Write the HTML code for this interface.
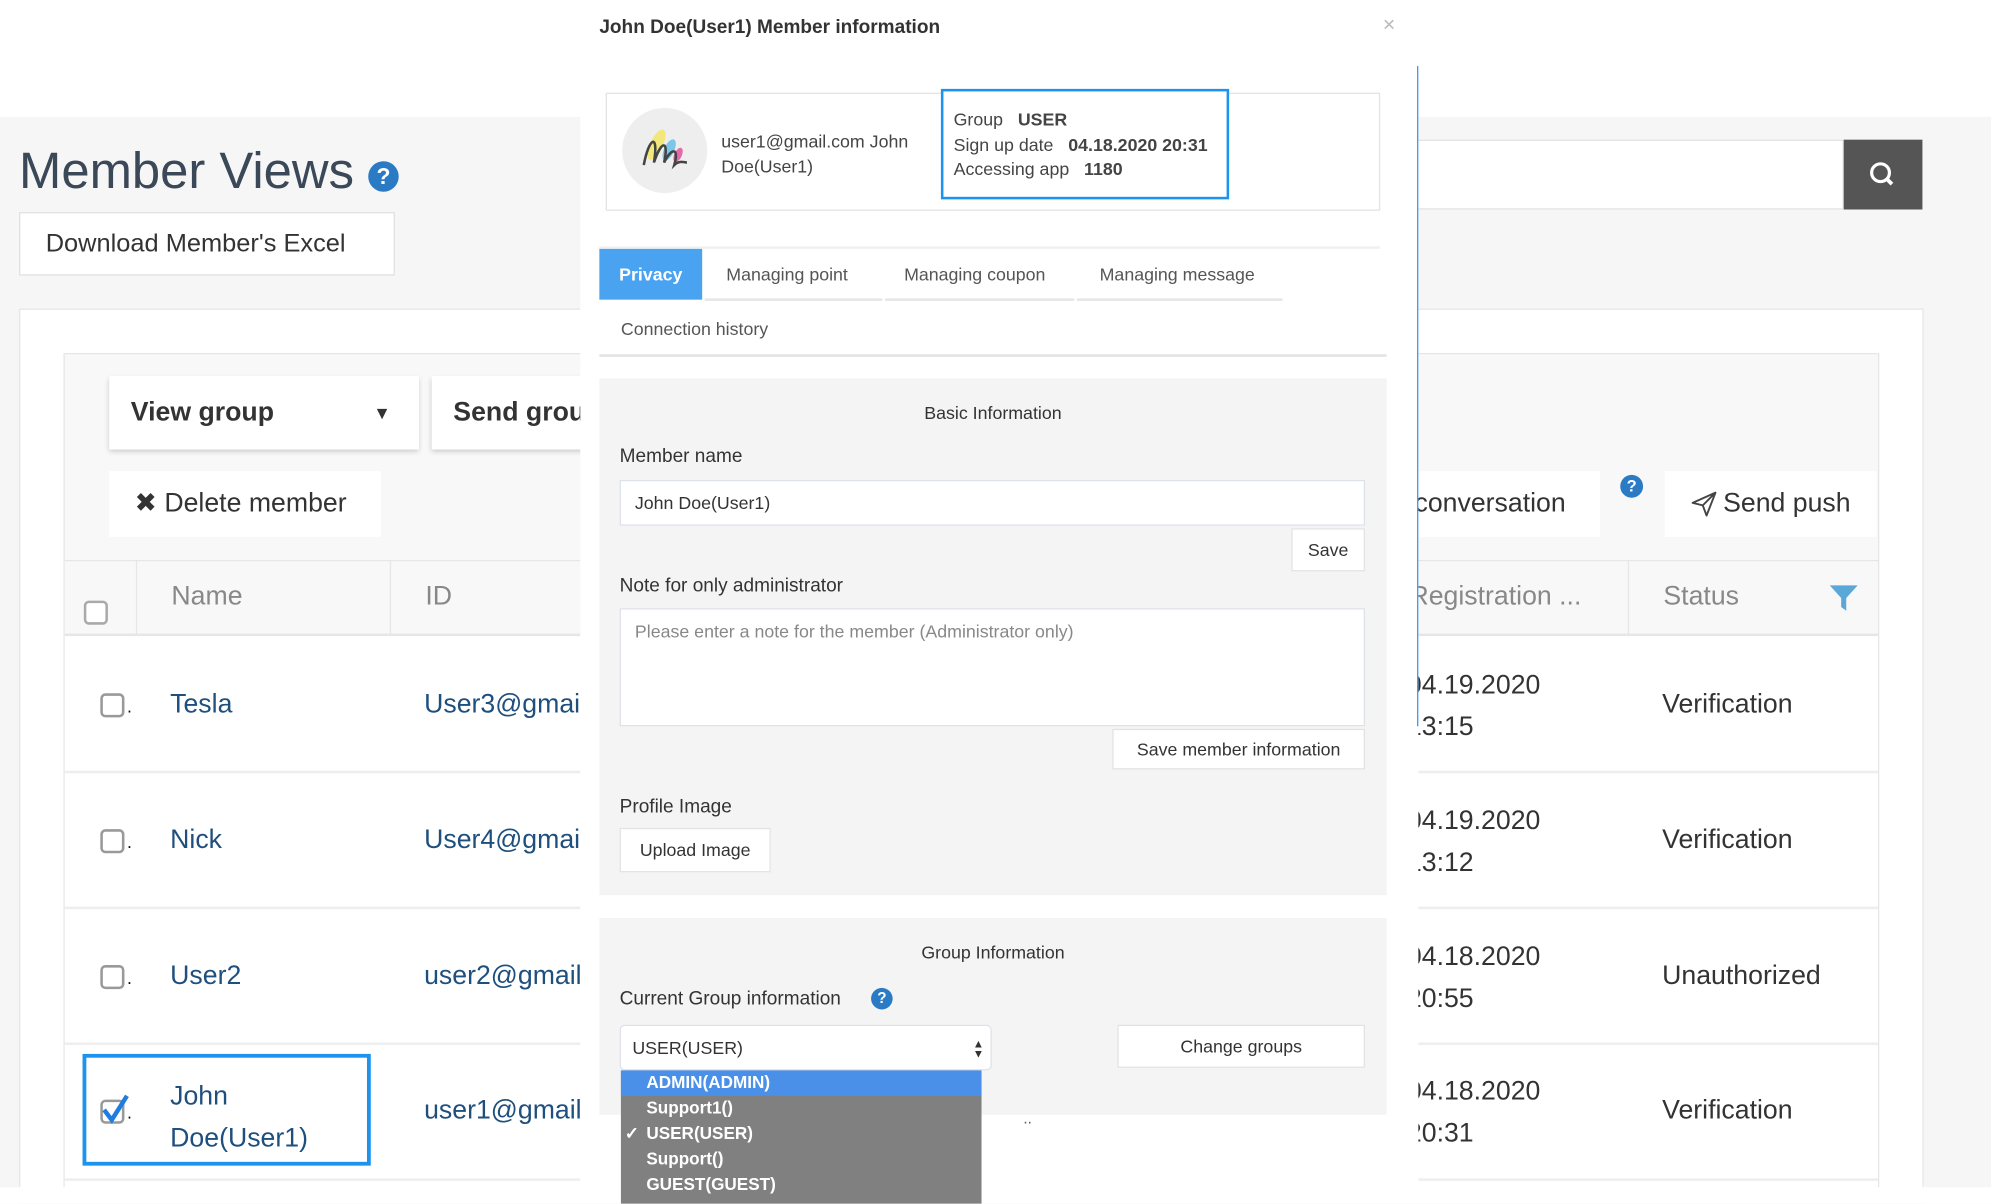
<!DOCTYPE html>
<html><head><meta charset="utf-8"><style>
*{box-sizing:border-box;margin:0;padding:0}
html,body{width:1991px;height:1204px;overflow:hidden;background:#fff;font-family:"Liberation Sans",sans-serif}
#s{position:absolute;left:0;top:0;width:1568px;height:948px;transform:scale(1.26977);transform-origin:0 0;background:#fff;overflow:hidden}
.a{position:absolute}
.box{position:absolute;background:#fff}
.t{position:absolute;white-space:nowrap}
.help{position:absolute;border-radius:50%;background:#2a7bc4;color:#fff;font-weight:bold;text-align:center}
.cb{position:absolute;width:19px;height:19px;border:2px solid #999;border-radius:4px;background:#fff}
.link{color:#1f4f7d;font-size:21px}
.btn{position:absolute;background:#fff;border:1px solid #e2e2e2;font-size:14px;color:#333;text-align:center}
</style></head><body><div id="s">
<div class="a" style="left:0;top:92px;width:1568px;height:856px;background:#f6f6f6"></div>
<div class="t" style="left:15px;top:113px;font-size:40px;color:#3b4858">Member Views</div>
<div class="help" style="left:290px;top:127px;width:24px;height:24px;font-size:18px;line-height:24px">?</div>
<div class="box" style="left:15px;top:167px;width:296px;height:50px;border:1px solid #e0e0e0;font-size:20px;color:#333;line-height:48px;padding-left:20px">Download Member's Excel</div>
<div class="box" style="left:15px;top:243px;width:1500px;height:705px;border:1px solid #e6e6e6"></div>
<div class="a" style="left:50px;top:278px;width:1430px;height:670px;background:#f8f8f8;border:1px solid #e6e6e6"></div>
<div class="box" style="left:86px;top:296px;width:244px;height:58px;box-shadow:0 2px 4px rgba(0,0,0,.18);font-size:21px;color:#333;line-height:58px;padding-left:17px;font-weight:bold">View group<span style="position:absolute;left:208px;top:0;font-size:14px">▼</span></div>
<div class="box" style="left:340px;top:296px;width:140px;height:58px;box-shadow:0 2px 4px rgba(0,0,0,.18);font-size:21px;color:#333;line-height:58px;padding-left:17px;font-weight:bold">Send group</div>
<div class="box" style="left:86px;top:371px;width:214px;height:52px;font-size:21px;color:#333;line-height:52px;padding-left:20px">✖ Delete member</div>
<div class="box" style="left:1100px;top:110px;width:352px;height:55px;border:1px solid #e3e3e3"></div>
<div class="a" style="left:1452px;top:110px;width:62px;height:55px;background:#555">
<svg width="62" height="55"><circle cx="29" cy="26" r="7" fill="none" stroke="#fff" stroke-width="2.5"/><line x1="34" y1="31" x2="38" y2="35" stroke="#fff" stroke-width="3"/></svg></div>
<div class="box" style="left:1100px;top:371px;width:160px;height:52px;font-size:21px;color:#333;line-height:52px;padding-left:14px">conversation</div>
<div class="help" style="left:1276px;top:374px;width:18px;height:18px;font-size:13px;line-height:18px">?</div>
<div class="box" style="left:1311px;top:371px;width:167px;height:52px;font-size:21px;color:#333;line-height:52px;padding-left:46px">Send push
<svg class="a" style="left:20px;top:15px" width="22" height="22" viewBox="0 0 22 22"><path d="M2 10 L20 2 L13 20 L10 12 Z M10 12 L20 2" fill="none" stroke="#444" stroke-width="1.5" stroke-linejoin="round"/></svg></div>
<div class="a" style="left:51px;top:441px;width:1428px;height:60px;background:#f8f8f8;border-top:1px solid #e6e6e6;border-bottom:2px solid #e6e6e6"></div>
<div class="a" style="left:107px;top:441px;width:1px;height:60px;background:#e6e6e6"></div>
<div class="a" style="left:307px;top:441px;width:1px;height:60px;background:#e6e6e6"></div>
<div class="a" style="left:1282px;top:441px;width:1px;height:60px;background:#e6e6e6"></div>
<div class="cb" style="left:66px;top:473px;border-color:#aaa"></div>
<div class="t" style="left:135px;top:458px;font-size:21px;color:#888">Name</div>
<div class="t" style="left:335px;top:458px;font-size:21px;color:#888">ID</div>
<div class="t" style="left:1110px;top:458px;font-size:21px;color:#888">Registration ...</div>
<div class="t" style="left:1310px;top:458px;font-size:21px;color:#888">Status</div>
<svg class="a" style="left:1440px;top:460px" width="24" height="22"><path d="M1 1 H23 L14 11 V21 L10 18 V11 Z" fill="#5aa7d8"/></svg>
<div class="a" style="left:51px;top:501px;width:1428px;height:447px;background:#fff"></div>
<div class="a" style="left:51px;top:607px;width:1428px;height:2px;background:#eee"></div>
<div class="a" style="left:51px;top:714px;width:1428px;height:2px;background:#eee"></div>
<div class="a" style="left:51px;top:821px;width:1428px;height:2px;background:#eee"></div>
<div class="a" style="left:51px;top:928px;width:1428px;height:2px;background:#eee"></div>
<div class="cb" style="left:79px;top:546px"></div><div class="t" style="left:100px;top:548px;font-size:14px">.</div>
<div class="cb" style="left:79px;top:653px"></div><div class="t" style="left:100px;top:655px;font-size:14px">.</div>
<div class="cb" style="left:79px;top:760px"></div><div class="t" style="left:100px;top:762px;font-size:14px">.</div>
<div class="cb" style="left:79px;top:866px"></div><div class="t" style="left:100px;top:868px;font-size:14px">.</div>
<svg class="a" style="left:79px;top:860px" width="24" height="26"><path d="M3 14 L9 22 L21 3" fill="none" stroke="#1f7ce0" stroke-width="3.5"/></svg>
<div class="a" style="left:65px;top:830px;width:227px;height:88px;border:3px solid #1c93ee"></div>
<div class="t link" style="left:134px;top:543px">Tesla</div>
<div class="t link" style="left:134px;top:650px">Nick</div>
<div class="t link" style="left:134px;top:757px">User2</div>
<div class="t link" style="left:134px;top:847px;line-height:33px">John<br>Doe(User1)</div>
<div class="t link" style="left:334px;top:543px">User3@gmail.com</div>
<div class="t link" style="left:334px;top:650px">User4@gmail.com</div>
<div class="t link" style="left:334px;top:757px">user2@gmail.com</div>
<div class="t link" style="left:334px;top:863px">user1@gmail.com</div>
<div class="t" style="left:1108px;top:523px;font-size:21px;color:#333;line-height:33px">04.19.2020<br>13:15</div>
<div class="t" style="left:1108px;top:630px;font-size:21px;color:#333;line-height:33px">04.19.2020<br>13:12</div>
<div class="t" style="left:1108px;top:737px;font-size:21px;color:#333;line-height:33px">04.18.2020<br>20:55</div>
<div class="t" style="left:1108px;top:843px;font-size:21px;color:#333;line-height:33px">04.18.2020<br>20:31</div>
<div class="t" style="left:1309px;top:543px;font-size:21px;color:#333">Verification</div>
<div class="t" style="left:1309px;top:650px;font-size:21px;color:#333">Verification</div>
<div class="t" style="left:1309px;top:757px;font-size:21px;color:#333">Unauthorized</div>
<div class="t" style="left:1309px;top:863px;font-size:21px;color:#333">Verification</div>
<div class="a" style="left:0;top:935px;width:1568px;height:13px;background:#fff"></div>
<div class="a" style="left:457px;top:0;width:660px;height:948px;background:#fff"></div>
<div class="a" style="left:1116px;top:52px;width:1px;height:520px;background:#3a96f0"></div>
<div class="t" style="left:472px;top:13px;font-size:15px;font-weight:bold;color:#333">John Doe(User1) Member information</div>
<div class="t" style="left:1089px;top:10px;font-size:17px;color:#bbb">×</div>
<div class="a" style="left:477px;top:73px;width:610px;height:93px;border:1px solid #e3e3e3"></div>
<div class="a" style="left:490px;top:85px;width:67px;height:67px;border-radius:50%;background:#eee"></div>
<svg class="a" style="left:501px;top:98px" width="44" height="40"><ellipse cx="16" cy="16" rx="5" ry="13" fill="#f2e77a" transform="rotate(25 16 16)"/><ellipse cx="26" cy="20" rx="4" ry="9" fill="#7cc7e8" transform="rotate(25 26 20)"/><ellipse cx="33" cy="24" rx="3" ry="6" fill="#e26aa8" transform="rotate(25 33 24)"/><path d="M6 32 C10 10 18 6 14 30 C20 12 26 12 22 30 C28 18 34 18 30 32 C34 28 38 30 40 30" fill="none" stroke="#444" stroke-width="2"/></svg>
<div class="t" style="left:568px;top:101px;font-size:14px;color:#444;line-height:20px">user1@gmail.com John<br>Doe(User1)</div>
<div class="a" style="left:741px;top:70px;width:227px;height:87px;border:2px solid #1c93ee;background:#fff"></div>
<div class="t" style="left:751px;top:85px;font-size:14px;color:#444;line-height:19.5px">Group &nbsp; <b>USER</b><br>Sign up date &nbsp; <b>04.18.2020 20:31</b><br>Accessing app &nbsp; <b>1180</b></div>
<div class="a" style="left:472px;top:194px;width:615px;height:2px;background:#f0f0f0"></div>
<div class="a" style="left:472px;top:196px;width:81px;height:40px;background:#4aa3f0;color:#fff;font-size:14px;line-height:40px;text-align:center;font-weight:bold">Privacy</div>
<div class="a" style="left:555px;top:235px;width:140px;height:2px;background:#e6e6e6"></div>
<div class="a" style="left:697px;top:235px;width:149px;height:2px;background:#e6e6e6"></div>
<div class="a" style="left:848px;top:235px;width:162px;height:2px;background:#e6e6e6"></div>
<div class="t" style="left:572px;top:208px;font-size:14px;color:#555">Managing point</div>
<div class="t" style="left:712px;top:208px;font-size:14px;color:#555">Managing coupon</div>
<div class="t" style="left:866px;top:208px;font-size:14px;color:#555">Managing message</div>
<div class="t" style="left:489px;top:251px;font-size:14px;color:#555">Connection history</div>
<div class="a" style="left:472px;top:279px;width:620px;height:2px;background:#e3e3e3"></div>
<div class="a" style="left:472px;top:298px;width:620px;height:407px;background:#f4f4f4"></div>
<div class="t" style="left:472px;width:620px;text-align:center;top:317px;font-size:14px;color:#333">Basic Information</div>
<div class="t" style="left:488px;top:351px;font-size:15px;color:#333">Member name</div>
<div class="box" style="left:488px;top:378px;width:587px;height:36px;border:1px solid #dde2e8;font-size:14px;color:#333;line-height:34px;padding-left:11px">John Doe(User1)</div>
<div class="btn" style="left:1017px;top:416px;width:58px;height:34px;line-height:32px">Save</div>
<div class="t" style="left:488px;top:453px;font-size:15px;color:#333">Note for only administrator</div>
<div class="box" style="left:488px;top:479px;width:587px;height:93px;border:1px solid #dde2e8;font-size:14px;color:#888;padding:9px 11px">Please enter a note for the member (Administrator only)</div>
<div class="btn" style="left:876px;top:574px;width:199px;height:32px;line-height:30px">Save member information</div>
<div class="t" style="left:488px;top:627px;font-size:15px;color:#333">Profile Image</div>
<div class="btn" style="left:488px;top:652px;width:119px;height:35px;line-height:33px">Upload Image</div>
<div class="a" style="left:472px;top:723px;width:620px;height:155px;background:#f4f4f4"></div>
<div class="t" style="left:472px;width:620px;text-align:center;top:742px;font-size:14px;color:#333">Group Information</div>
<div class="t" style="left:488px;top:778px;font-size:15px;color:#333">Current Group information</div>
<div class="help" style="left:686px;top:778px;width:17px;height:17px;font-size:12px;line-height:17px">?</div>
<div class="box" style="left:488px;top:807px;width:293px;height:36px;border:1px solid #dde2e8;border-radius:4px;font-size:14px;color:#333;line-height:34px;padding-left:9px">USER(USER)<span style="position:absolute;right:5px;top:0;font-size:9px;line-height:8px;padding-top:10px;color:#333">▲<br>▼</span></div>
<div class="btn" style="left:880px;top:807px;width:195px;height:34px;line-height:32px">Change groups</div>
<div class="t" style="left:806px;top:874px;font-size:12px;color:#555">..</div>
<div class="a" style="left:489px;top:843px;width:284px;height:105px;background:#808080;color:#fff;font-size:13.5px;font-weight:bold;line-height:20px">
<div style="background:#4a90e8;padding-left:20px;height:20px">ADMIN(ADMIN)</div>
<div style="padding-left:20px">Support1()</div>
<div style="padding-left:20px;position:relative"><span style="position:absolute;left:3px">✓</span>USER(USER)</div>
<div style="padding-left:20px">Support()</div>
<div style="padding-left:20px">GUEST(GUEST)</div>
</div>
</div></body></html>
